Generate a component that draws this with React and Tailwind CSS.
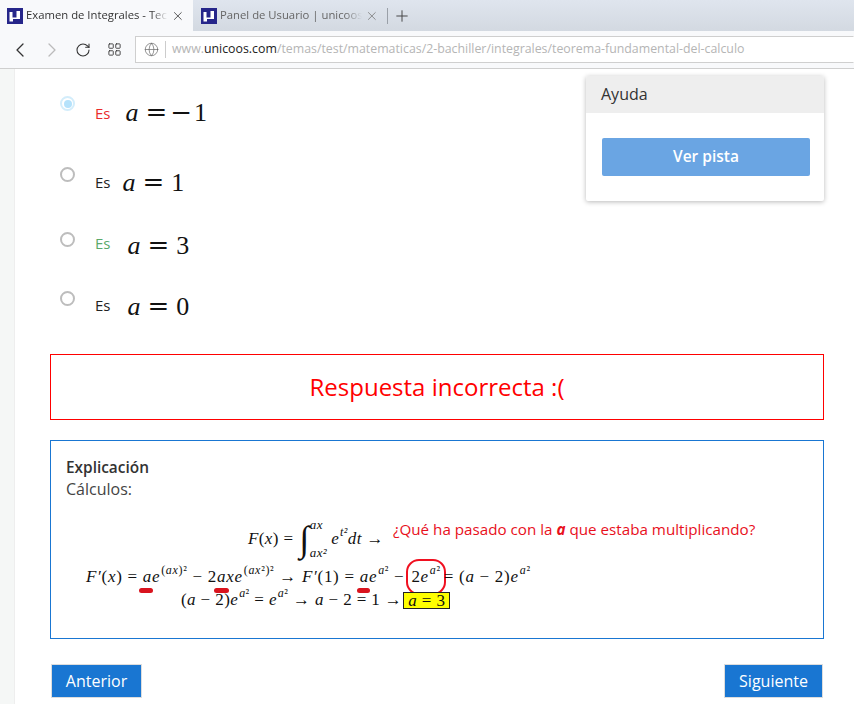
import React from "react";
import { ChevronLeft, ChevronRight, RotateCw, LayoutGrid, Globe, X, Plus } from "lucide-react";

const sans = { fontFamily: '"Open Sans", sans-serif' };

function Logo() {
  return (
    <svg width="16" height="16" viewBox="0 0 16 16" className="shrink-0">
      <rect width="16" height="16" fill="#26268a" />
      <path d="M2.5 4h3v5.5h4V3h3.5v8H6v2.5H2.5z" fill="#ffffff" />
    </svg>
  );
}

function Tab({ active, title }) {
  return (
    <div className={active ? "flex h-[31px] w-[193px] items-center gap-[3px] bg-[#f8f9fb] pl-[7px] pr-[8px]" : "flex h-[31px] w-[194px] items-center gap-[3px] pl-[8px] pr-[8px]"}>
      <Logo />
      <span className={active ? "h-[17px] w-[145px] overflow-hidden whitespace-nowrap text-[11.3px] leading-[16px] text-[#333] [mask-image:linear-gradient(to_right,black_88%,transparent)]" : "h-[17px] w-[145px] overflow-hidden whitespace-nowrap text-[11.3px] leading-[16px] text-[#666] [mask-image:linear-gradient(to_right,black_88%,transparent)]"}>{title}</span>
      <X size={14} strokeWidth={1.4} className={active ? "ml-auto text-[#333]" : "ml-auto text-[#777]"} />
    </div>
  );
}

function I({ children }) {
  return <i className="italic">{children}</i>;
}

function Sup({ children }) {
  return <sup className="relative top-[-2px] ml-[1px] align-super text-[12px] leading-none not-italic">{children}</sup>;
}

function Mark({ children, cls }) {
  return (
    <span className="relative inline-block">
      {children}
      <span className={cls} />
    </span>
  );
}

function Op({ children, cls }) {
  return <span className={cls} style={{ fontFamily: '"DejaVu Serif", serif' }}>{children}</span>;
}

function Option({ rowCls, radio, esCls, mathCls, children }) {
  return (
    <div className={rowCls}>
      {radio}
      <span className={esCls}>Es</span>
      <span className={mathCls} style={{ fontFamily: '"Liberation Serif", serif' }}>{children}</span>
    </div>
  );
}

const emptyRadio = "h-[15px] w-[15px] shrink-0 rounded-full border-2 border-[#bdbdbd]";
const mathBase = "flex items-baseline text-[26px] leading-[30px] text-[#111]";

export default function App() {
  return (
    <div className="flex h-[704px] w-[854px] flex-col overflow-hidden bg-white" style={sans}>
      <div className="flex h-[31px] items-center bg-gradient-to-b from-[#dfe5ee] to-[#d3d9e1]">
        <Tab active title="Examen de Integrales - Tec" />
        <Tab title="Panel de Usuario | unicoos" />
        <span className="h-[16px] w-px bg-[#9aa0a8]" />
        <Plus size={18} strokeWidth={1.3} className="ml-[5px] text-[#444]" />
      </div>
      <div className="flex h-[38px] items-center border-b border-[#cfcfcf] bg-[#f8f9fb]">
        <ChevronLeft size={24} strokeWidth={1.3} className="ml-[8px] text-[#333]" />
        <ChevronRight size={24} strokeWidth={1.3} className="ml-[8px] text-[#bbb]" />
        <RotateCw size={16} strokeWidth={1.6} className="ml-[11px] text-[#333]" />
        <LayoutGrid size={15} strokeWidth={1.4} className="ml-[16px] text-[#333]" />
        <div className="ml-[13px] flex h-[27px] flex-1 items-center border border-y-[#cfcfcf] border-l-[#cfcfcf] border-r-transparent bg-white">
          <Globe size={15} strokeWidth={1.1} className="ml-[8px] text-[#666]" />
          <span className="ml-[6px] h-[17px] w-px bg-[#ccc]" />
          <span className="ml-[6px] whitespace-nowrap text-[12.35px] text-[#b5b5b5]">www.<span className="text-[#222]">unicoos.com</span>/temas/test/matematicas/2-bachiller/integrales/teorema-fundamental-del-calculo</span>
        </div>
      </div>
      <div className="flex flex-1">
        <div className="w-[15px] border-r border-[#eeeeee] bg-[#f5f7f6]" />
        <div className="flex flex-1 flex-col pl-[35px] pr-[30px]">
          <div className="flex h-[285px]">
            <div className="flex-1 text-[#222]">
              <Option
                rowCls="flex h-[71px] items-start pl-[10px] pt-[27px]"
                radio={<span className="flex h-[15px] w-[15px] shrink-0 items-center justify-center rounded-full border-2 border-[#d3edfb]"><span className="h-[8px] w-[8px] rounded-full bg-[#b5e2fb]" /></span>}
                esCls="ml-[20px] mt-[6px] text-[15px] text-[#ea2b2b]"
                mathCls={"ml-[15px] mt-[1px] " + mathBase}
              >
                <I>a</I><Op cls="ml-[7px]">=</Op><Op cls="ml-[3px]">−</Op><span className="ml-[2px]">1</span>
              </Option>
              <Option
                rowCls="flex h-[65px] items-start pl-[10px] pt-[27px]"
                radio={<span className={emptyRadio} />}
                esCls="ml-[20px] mt-[4px] text-[15px] text-[#222]"
                mathCls={"ml-[12px] mt-[0px] " + mathBase}
              >
                <I>a</I><Op cls="ml-[7px]">=</Op><span className="ml-[7px]">1</span>
              </Option>
              <Option
                rowCls="flex h-[59px] items-start pl-[10px] pt-[27px]"
                radio={<span className={emptyRadio} />}
                esCls="ml-[20px] mt-[0px] text-[15px] text-[#5aa96a]"
                mathCls={"ml-[17px] mt-[-2px] " + mathBase}
              >
                <I>a</I><Op cls="ml-[7px]">=</Op><span className="ml-[7px]">3</span>
              </Option>
              <Option
                rowCls="flex items-start pl-[10px] pt-[27px]"
                radio={<span className={emptyRadio} />}
                esCls="ml-[20px] mt-[3px] text-[15px] text-[#222]"
                mathCls={"ml-[17px] mt-[0px] " + mathBase}
              >
                <I>a</I><Op cls="ml-[7px]">=</Op><span className="ml-[7px]">0</span>
              </Option>
            </div>
            <div className="mt-[7px] h-[125px] w-[238px] overflow-hidden rounded-[2px] bg-white shadow-[0_1px_5px_rgba(0,0,0,0.28)]">
              <div className="flex h-[37px] items-center bg-[#eeeeee] pb-[2px] pl-[15px] text-[16px] text-[#333]">Ayuda</div>
              <div className="pl-[16px] pr-[14px] pt-[25px]">
                <div className="flex h-[38px] items-center justify-center rounded-[2px] bg-[#6aa5e3] text-[15.5px] font-semibold text-white">Ver pista</div>
              </div>
            </div>
          </div>
          <div className="flex h-[66px] items-center justify-center border border-[#ff0000] text-[24px] font-medium text-[#ff0000]">Respuesta incorrecta :(</div>
          <div className="mt-[20px] h-[199px] border border-[#1976d2] pl-[15px] pt-[17px] text-[#222]">
            <div className="text-[15.4px] font-semibold leading-[20px] text-[#333]">Explicación</div>
            <div className="text-[16px] leading-[22px] text-[#444]">Cálculos:</div>
            <div className="mt-[18px] text-[17px] text-[#111]" style={{ fontFamily: '"Liberation Serif", serif' }}>
              <div className="flex h-[42px] items-center pl-[182px] tracking-[0.4px]">
                <span className="whitespace-nowrap"><I>F</I>(<I>x</I>) =</span>
                <span className="ml-[6px] text-[36px] leading-none">∫</span>
                <span className="mr-[4px] flex h-[42px] flex-col justify-between text-[13px] italic leading-[14px]"><span>ax</span><span>ax²</span></span>
                <span className="whitespace-nowrap"><I>e</I><Sup><I>t²</I></Sup><I>dt</I> →</span>
                <span className="mb-[20px] ml-[9px] whitespace-nowrap text-[15.2px] tracking-normal text-[#e8101c]" style={sans}>¿Qué ha pasado con la <b className="italic">a</b> que estaba multiplicando?</span>
              </div>
              <div className="mt-[4px] flex h-[26px] items-center whitespace-nowrap pl-[20px] tracking-[0.7px]">
                <span><I>F′</I>(<I>x</I>) = <Mark cls="absolute bottom-[-3px] left-[-4px] h-[5px] w-[14px] rounded-full bg-[#d9141e]"><I>a</I></Mark><I>e</I><Sup>(<I>ax</I>)²</Sup> − 2<Mark cls="absolute bottom-[-3px] left-[-3px] h-[5px] w-[15px] rounded-full bg-[#d9141e]"><I>a</I></Mark><I>xe</I><Sup>(<I>ax</I>²)²</Sup> → <I>F′</I>(1) = <Mark cls="absolute bottom-[-3px] left-[-3px] h-[5px] w-[13px] rounded-full bg-[#d9141e]"><I>a</I></Mark><I>e</I><Sup><I>a</I>²</Sup> −</span>
                <span className="ml-[2px] flex h-[36px] shrink-0 items-center rounded-[13px] border-2 border-[#f01020] px-[3px]"><span>2<I>e</I><Sup><I>a</I>²</Sup></span></span>
                <span className="ml-[-2px]">= (<I>a</I> − 2)<I>e</I><Sup><I>a</I>²</Sup></span>
              </div>
              <div className="flex h-[20px] items-center whitespace-nowrap pl-[115px] tracking-[0.4px]">
                <span>(<I>a</I> − 2)<I>e</I><Sup><I>a</I>²</Sup> = <I>e</I><Sup><I>a</I>²</Sup> → <I>a</I> − 2 = 1 →</span>
                <span className="ml-[1px] border border-[#222] bg-[#ffff00] px-[4px] leading-[15px]"><I>a</I> = 3</span>
              </div>
            </div>
          </div>
          <div className="mt-[25px] flex justify-between px-[1px]">
            <div className="flex h-[34px] w-[91px] items-center justify-center border border-[#dddddd] bg-[#1976d2] text-[16px] font-medium text-white">Anterior</div>
            <div className="flex h-[34px] w-[99px] items-center justify-center border border-[#dddddd] bg-[#1976d2] text-[16px] font-medium text-white">Siguiente</div>
          </div>
        </div>
      </div>
    </div>
  );
}
